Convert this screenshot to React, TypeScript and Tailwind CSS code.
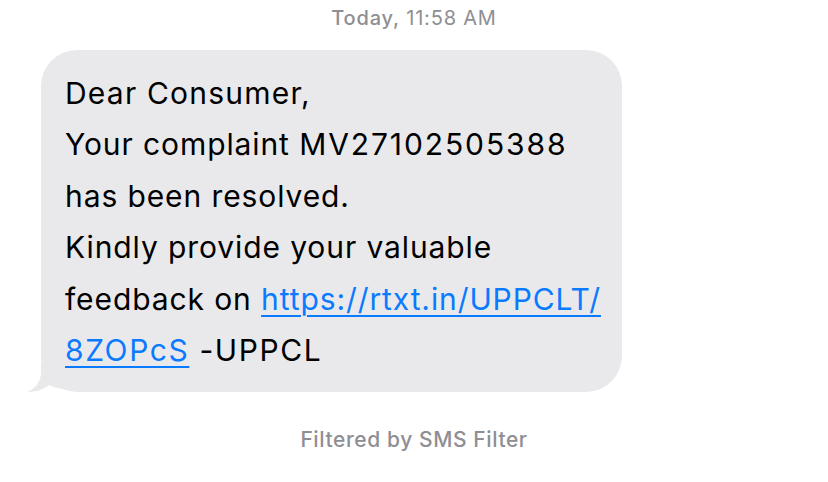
import React from "react";

export default function App() {
  const font = { fontFamily: "Inter, 'Liberation Sans', sans-serif" };
  return (
    <div className="w-[828px] h-[482px] bg-white flex flex-col" style={font}>
      <div className="pt-[6px] h-[50px] text-center text-[20px] leading-[24px] text-[#8e8e93] tracking-[0.8px]">
        <span className="font-medium">Today,</span> <span>11:58 AM</span>
      </div>
      <div className="pl-[41px]">
        <div className="relative w-[581px]">
          <svg
            className="absolute left-[-14px] bottom-0"
            width="40"
            height="30"
            viewBox="0 0 40 30"
          >
            <path
              d="M14 0 L14 10 C14 20 8 27 0 30 C8 30 16 28 22 23 C28 26 34 27 40 27 L40 0 Z"
              fill="#e9e9eb"
            />
          </svg>
          <div className="relative bg-[#e9e9eb] rounded-[36px] pl-[24px] pr-[20px] pt-[18px] pb-[16px] text-[30px] leading-[51.4px] text-black tracking-[0.9px]">
            <div className="tracking-[1.2px]">Dear Consumer,</div>
            <div>
              Your complaint <span className="tracking-[1.9px]">MV27102505388</span>
            </div>
            <div>has been resolved.</div>
            <div>Kindly provide your valuable</div>
            <div>
              feedback on{" "}
              <span className="text-[#0a7aff] underline decoration-[2px] underline-offset-[5px]">
                https://rtxt.in/UPPCLT/
              </span>
            </div>
            <div className="tracking-[1.6px]">
              <span className="text-[#0a7aff] underline decoration-[2px] underline-offset-[5px]">
                8ZOPcS
              </span>{" "}
              -UPPCL
            </div>
          </div>
        </div>
      </div>
      <div className="pt-[36px] text-center text-[21px] leading-[24px] font-medium text-[#8e8e93] tracking-[0.6px]">
        Filtered by SMS Filter
      </div>
    </div>
  );
}
